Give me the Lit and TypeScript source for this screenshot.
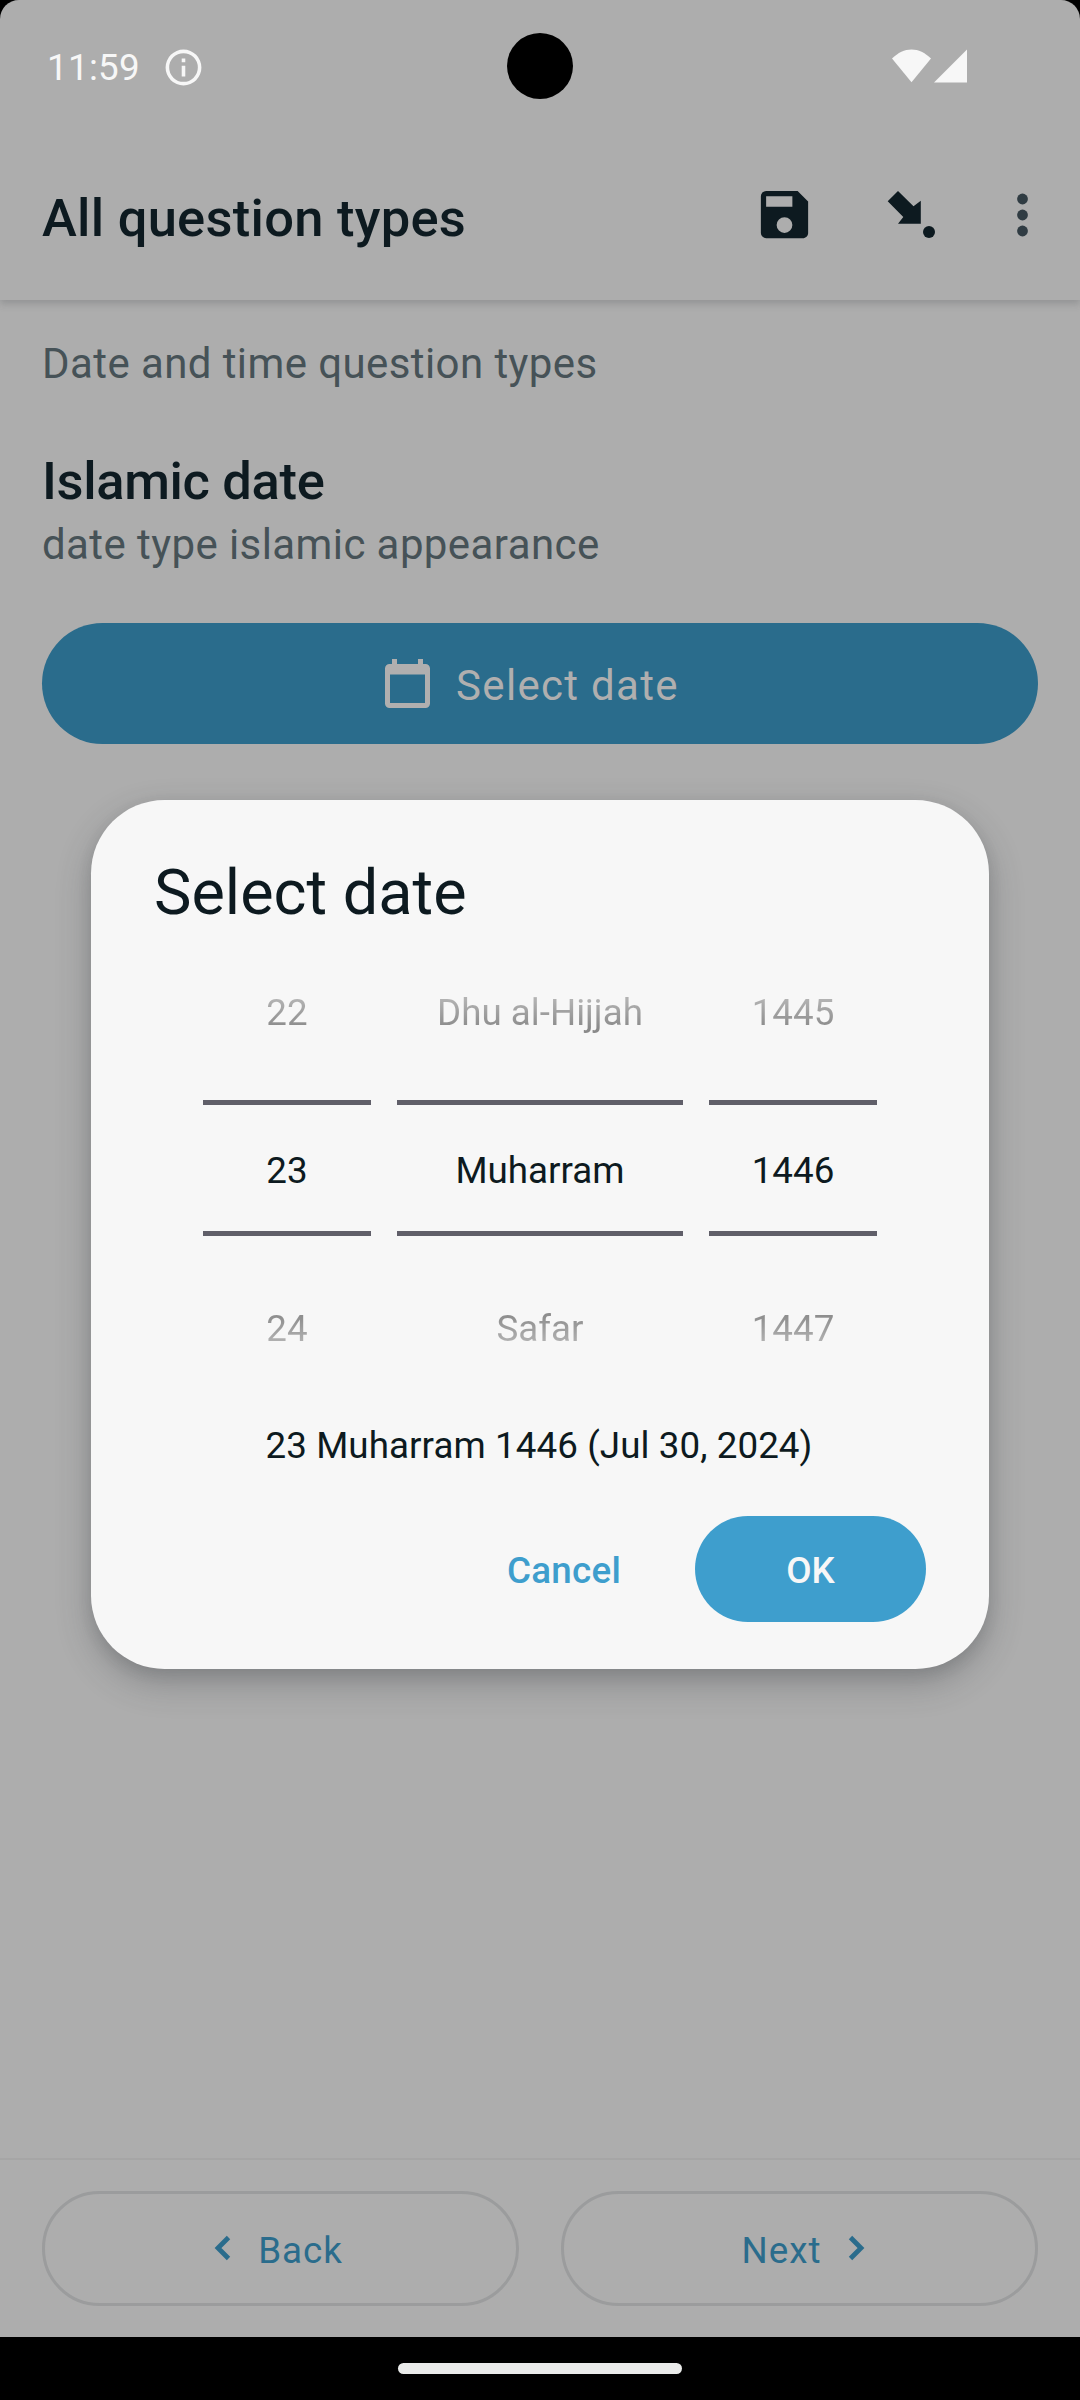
import { LitElement, html, css, svg } from "lit";
import { customElement, property } from "lit/decorators.js";

@customElement("status-bar")
class StatusBar extends LitElement {
  static styles = css`
    :host { display: block; height: 136px; }
    .bar { height: 136px; display: flex; align-items: center; color: #f7f7f7; padding: 0 113px 0 47px; }
    .clock { font-size: 36.75px; line-height: 44px; width: 115px; letter-spacing: 0.3px; }
    .info { display: block; width: 43px; height: 43px; margin-bottom: 1px; }
    .space { flex: 1; }
    .net { display: block; width: 76px; height: 34px; margin-bottom: 4px; }
    .camera { position: absolute; left: 507px; top: 33px; width: 66px; height: 66px; border-radius: 50%; background: #000; }
  `;
  render() {
    return html`<div class="bar">
      <span class="clock">11:59</span>
      <svg class="info" viewBox="0 0 24 24" fill="currentColor">
        <path d="M11 7h2v2h-2zM11 11h2v6h-2zM12 2a10 10 0 1 0 0 20a10 10 0 1 0 0-20zM12 20a8 8 0 1 1 0-16a8 8 0 1 1 0 16z" />
      </svg>
      <span class="space"></span>
      <svg class="net" viewBox="0 0 76 34" fill="currentColor">
        <path d="M1 9.6C7 3.6 13.500 0.500 20.500 0.500S34 3.600 40 9.600L20.500 33.300z" />
        <path d="M76 .5V33.500H43z" />
      </svg>
      <div class="camera"></div>
    </div>`;
  }
}

@customElement("app-bar")
class AppBar extends LitElement {
  static styles = css`
    :host { display: block; }
    .bar { height: 164px; box-sizing: border-box; display: flex; align-items: center; padding-left: 42px; padding-right: 26px; color: #0d1a20; box-shadow: 0 4px 7px rgba(70, 74, 80, 0.25); clip-path: inset(0 0 -14px 0); background: #adadad; }
    .title { flex: 1; font-size: 52.5px; line-height: 62px; font-weight: 500; letter-spacing: 0.26px; }
    .icon { display: block; width: 63px; height: 63px; margin-bottom: 7px; }
    .save { margin-right: 65px; }
    .jump { margin-right: 47px; }
    .more { color: #303c43; }
  `;
  render() {
    return html`<div class="bar">
      <div class="title">All question types</div>
      <svg class="icon save" viewBox="0 0 24 24" fill="currentColor">
        <path d="M17 3H5a2 2 0 0 0-2 2v14a2 2 0 0 0 2 2h14c1.100 0 2-.9 2-2V7l-4-4zm-5 16a3 3 0 1 1 0-6a3 3 0 0 1 0 6zm3-10H5V5h10v4z" />
      </svg>
      <svg class="icon jump" viewBox="0 0 63 63" fill="currentColor">
        <path d="M17 8L32.500 23.300L39.800 17.800V40.700H17L22.300 34L6.700 18.300z" />
        <circle cx="48" cy="49" r="6" />
      </svg>
      <svg class="icon more" viewBox="0 0 63 63" fill="currentColor">
        <circle cx="31.500" cy="16" r="5.400" /><circle cx="31.500" cy="32" r="5.400" /><circle cx="31.500" cy="48" r="5.400" />
      </svg>
    </div>`;
  }
}

@customElement("question-view")
class QuestionView extends LitElement {
  static styles = css`
    :host { display: block; flex: 1; }
    .view { padding: 39px 42px 0; }
    .group, .hint { font-size: 42px; line-height: 50px; letter-spacing: 0.41px; color: #465257; }
    .label { margin-top: 61px; font-size: 52.5px; line-height: 62px; font-weight: 500; letter-spacing: -0.35px; color: #0d1a20; }
    .hint { margin-top: 8px; }
    .button { margin-top: 53px; height: 121px; box-sizing: border-box; padding-right: 16px; border-radius: 61px; background: #2a6c8c; color: #b0afaf; display: flex; align-items: center; justify-content: center; gap: 26px; }
    .icon { display: block; width: 45px; height: 49px; }
    .text { font-size: 42px; line-height: 50px; letter-spacing: 1.31px; padding-top: 4px; }
  `;
  render() {
    return html`<div class="view">
      <div class="group">Date and time question types</div>
      <div class="label">Islamic date</div>
      <div class="hint">date type islamic appearance</div>
      <div class="button">
        <svg class="icon" viewBox="0 0 45 49" fill="currentColor">
          <path fill-rule="evenodd" d="M7 0h5v5h21V0h5v5h2.500a4.500 4.500 0 0 1 4.500 4.500v35a4.500 4.500 0 0 1-4.500 4.500h-36a4.500 4.500 0 0 1-4.500-4.500v-35A4.500 4.500 0 0 1 4.500 5H7zM5 15.500V44h35V15.500z" />
        </svg>
        <span class="text">Select date</span>
      </div>
    </div>`;
  }
}

@customElement("page-nav")
class PageNav extends LitElement {
  static styles = css`
    :host { display: block; }
    .nav { height: 179px; box-sizing: border-box; border-top: 2px solid #a6a6a6; padding: 31px 42px 0; display: grid; grid-template-columns: 1fr 1fr; gap: 42px; align-items: start; }
    .button { height: 115px; box-sizing: border-box; border: 3px solid #9b9c9d; border-radius: 58px; display: flex; align-items: center; justify-content: center; gap: 27px; color: #2a6c8c; font-size: 36.75px; line-height: 44px; letter-spacing: 1px; }
    .back { padding-right: 4px; }
    .next { padding-left: 8px; }
    .text { padding-top: 4px; }
    .chevron { display: block; width: 17px; height: 26px; margin-bottom: 1px; }
  `;
  render() {
    const chevron = (d: string) => html`<svg class="chevron" viewBox="0 0 17 26" fill="none" stroke="currentColor" stroke-width="4.800">${svg`<path d=${d} />`}</svg>`;
    return html`<div class="nav">
      <div class="button back">${chevron("M14.500 2.500L4 13L14.500 23.500")}<span class="text">Back</span></div>
      <div class="button next"><span class="text">Next</span>${chevron("M2.500 2.500L13 13L2.500 23.500")}</div>
    </div>`;
  }
}

@customElement("number-wheel")
class NumberWheel extends LitElement {
  @property({ type: Array }) values: string[] = [];
  static styles = css`
    :host { display: block; font-size: 36.75px; line-height: 44px; text-align: center; color: #0d1a20; }
    .cell { display: flex; align-items: center; justify-content: center; box-sizing: border-box; white-space: nowrap; }
    .before { height: 175px; }
    .current { height: 136px; border-top: 5px solid #605f69; border-bottom: 5px solid #605f69; padding-top: 5px; }
    .after { height: 184px; padding-top: 2px; }
    .faded { color: transparent; -webkit-background-clip: text; background-clip: text; }
    .before .faded { background-image: linear-gradient(#b2b2b2 20%, #8a8a8a 85%); }
    .after .faded { background-image: linear-gradient(#8e8e8e 20%, #b4b4b4 85%); }
  `;
  render() {
    const [before, current, after] = this.values;
    return html`
      <div class="cell before"><span class="faded">${before}</span></div>
      <div class="cell current">${current}</div>
      <div class="cell after"><span class="faded">${after}</span></div>
    `;
  }
}

@customElement("date-dialog")
class DateDialog extends LitElement {
  static styles = css`
    :host { display: block; }
    .dialog { box-sizing: border-box; width: 898px; height: 869px; border-radius: 73.5px; background: #f7f7f7; color: #0d1a20; padding: 60px 63px 0 63px; box-shadow: 0 14px 34px rgba(50, 54, 60, 0.3), 0 5px 14px rgba(50, 54, 60, 0.12); }
    .title { font-size: 63px; line-height: 65px; }
    .wheels { display: grid; grid-template-columns: 168px 286px 168px; column-gap: 26px; padding-left: 49px; }
    .summary { font-size: 36.75px; line-height: 50px; letter-spacing: 0.08px; text-align: center; padding: 1px 2px 0 0; }
    .actions { margin-top: 45px; display: flex; justify-content: flex-end; align-items: center; font-size: 36.75px; line-height: 44px; font-weight: 500; }
    .cancel { color: #3e9ecd; letter-spacing: 0.25px; padding: 4px 74px 0 0; }
    .ok { box-sizing: border-box; width: 231px; height: 106px; border-radius: 53px; background: #3e9ecd; color: #f7f7f7; display: flex; align-items: center; justify-content: center; padding-top: 4px; }
  `;
  render() {
    return html`<div class="dialog">
      <div class="title">Select date</div>
      <div class="wheels">
        <number-wheel .values=${["22", "23", "24"]}></number-wheel>
        <number-wheel .values=${["Dhu al-Hijjah", "Muharram", "Safar"]}></number-wheel>
        <number-wheel .values=${["1445", "1446", "1447"]}></number-wheel>
      </div>
      <div class="summary">23 Muharram 1446 (Jul 30, 2024)</div>
      <div class="actions"><span class="cancel">Cancel</span><div class="ok">OK</div></div>
    </div>`;
  }
}

@customElement("app-root")
class AppRoot extends LitElement {
  static styles = css`
    :host { display: block; width: 1080px; height: 2400px; position: relative; background: #000; font-family: Roboto, "Liberation Sans", sans-serif; overflow: hidden; }
    .screen { height: 2337px; display: flex; flex-direction: column; background: #adadad; border-radius: 19px 19px 0 0; }
    .gesture { height: 63px; display: flex; justify-content: center; align-items: flex-start; }
    .handle { margin-top: 26px; width: 284px; height: 11px; border-radius: 6px; background: #eaebea; }
    .modal { position: absolute; left: 91px; top: 800px; }
  `;
  render() {
    return html`
      <div class="screen">
        <status-bar></status-bar>
        <app-bar></app-bar>
        <question-view></question-view>
        <page-nav></page-nav>
      </div>
      <div class="gesture"><div class="handle"></div></div>
      <div class="modal"><date-dialog></date-dialog></div>
    `;
  }
}
